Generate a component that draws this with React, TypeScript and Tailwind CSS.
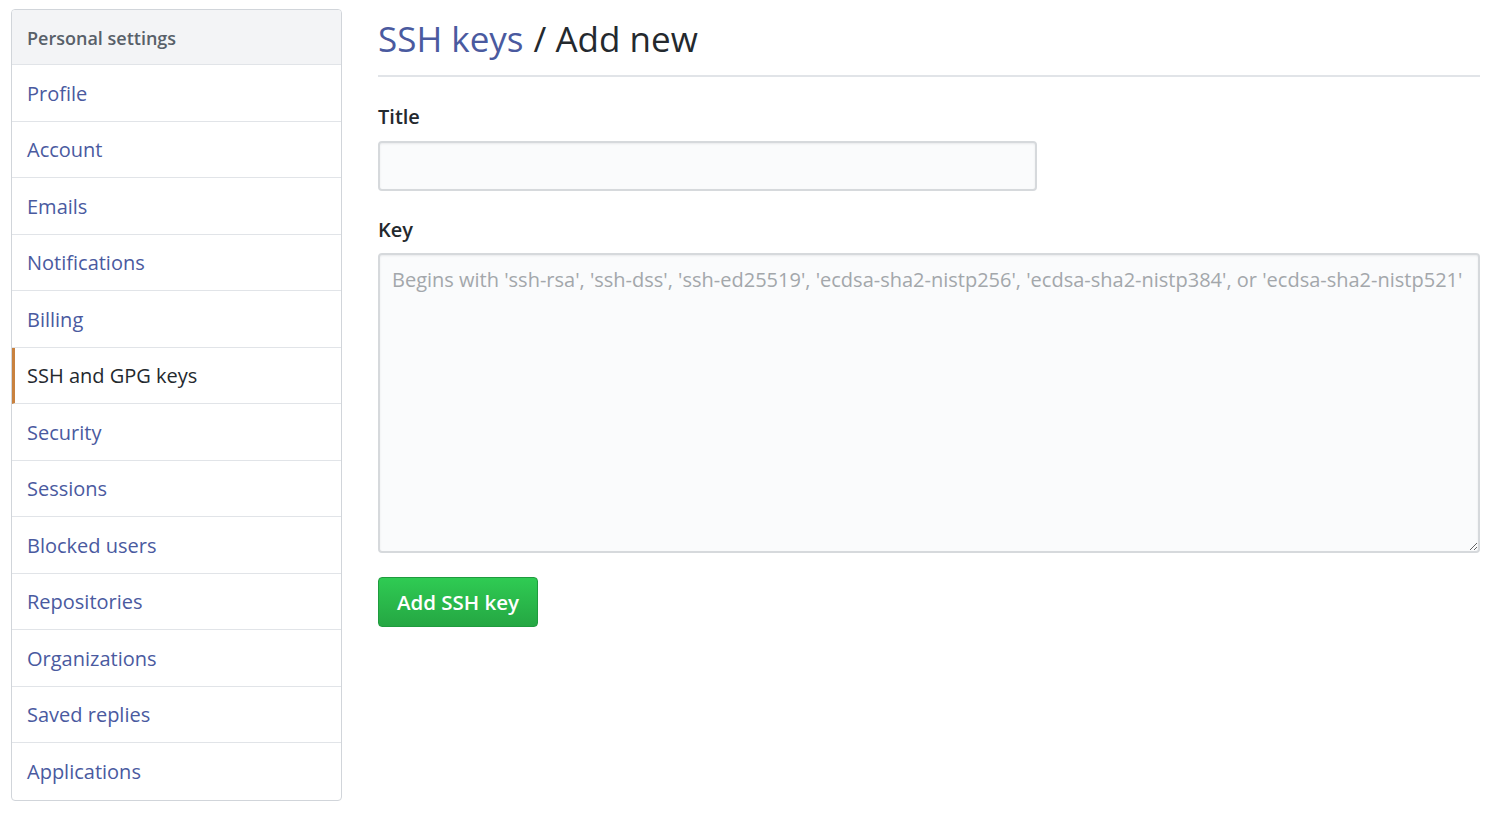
import React from "react";

const items = [
  "Profile",
  "Account",
  "Emails",
  "Notifications",
  "Billing",
  "SSH and GPG keys",
  "Security",
  "Sessions",
  "Blocked users",
  "Repositories",
  "Organizations",
  "Saved replies",
  "Applications",
];

export default function App() {
  return (
    <div
      className="flex min-h-screen w-[1505px] items-start gap-[36px] bg-white pl-[11px] pt-[9px]"
      style={{ fontFamily: '"Open Sans", "Noto Sans", sans-serif' }}
    >
      <nav className="w-[331px] shrink-0 overflow-hidden rounded-[4px] border border-[#d1d5da]">
        <div className="flex h-[55px] items-center border-b border-[#e1e4e8] bg-[#f3f4f6] px-[15px] pt-[2px] text-[18px] font-semibold text-[#586069]">
          Personal settings
        </div>
        {items.map((item) => {
          const active = item === "SSH and GPG keys";
          return (
            <div
              key={item}
              className={
                active
                  ? "flex h-[56.5px] items-center border-b border-l-[3px] border-[#e1e4e8] border-l-[#c8813f] pl-[12px] pt-[2px] text-[20px] text-[#24292e] last:border-b-0"
                  : "flex h-[56.5px] items-center border-b border-[#e1e4e8] px-[15px] pt-[2px] text-[20px] text-[#4a5a9f] last:border-b-0"
              }
            >
              {item}
            </div>
          );
        })}
      </nav>

      <main className="w-[1102px]">
        <div className="flex h-[68px] items-center border-b-2 border-[#e1e4e8] pb-[8px] text-[35px] leading-none text-[#24292e]">
          <span className="text-[#4a5a9f]">SSH keys</span>
          <span className="ml-[10px]">/ Add new</span>
        </div>
        <div className="mt-[25px] text-[20px] font-semibold text-[#24292e]">Title</div>
        <input
          type="text"
          className="mt-[9px] block h-[50px] w-[659px] rounded-[4px] border-2 border-[#d6d9dc] bg-[#fafbfc] px-[12px] text-[20px] shadow-[inset_0_1px_2px_rgba(27,31,35,0.075)] outline-none"
        />
        <div className="mt-[24px] text-[20px] font-semibold text-[#24292e]">Key</div>
        <textarea
          className="mt-[8px] block h-[300px] w-[1102px] resize-y rounded-[4px] border-2 border-[#d6d9dc] bg-[#fafbfc] px-[12px] py-[10px] text-[20px] leading-[30px] text-[#24292e] shadow-[inset_0_1px_2px_rgba(27,31,35,0.075)] outline-none placeholder:text-[#a3a7ab]"
          placeholder="Begins with 'ssh-rsa', 'ssh-dss', 'ssh-ed25519', 'ecdsa-sha2-nistp256', 'ecdsa-sha2-nistp384', or 'ecdsa-sha2-nistp521'"
        />
        <button
          type="button"
          className="mt-[24px] flex h-[50px] w-[160px] items-center justify-center rounded-[4px] border border-[#1f9b3e] bg-gradient-to-b from-[#2fcb53] to-[#25a743] text-[20.5px] font-semibold text-white"
        >
          Add SSH key
        </button>
      </main>
    </div>
  );
}
